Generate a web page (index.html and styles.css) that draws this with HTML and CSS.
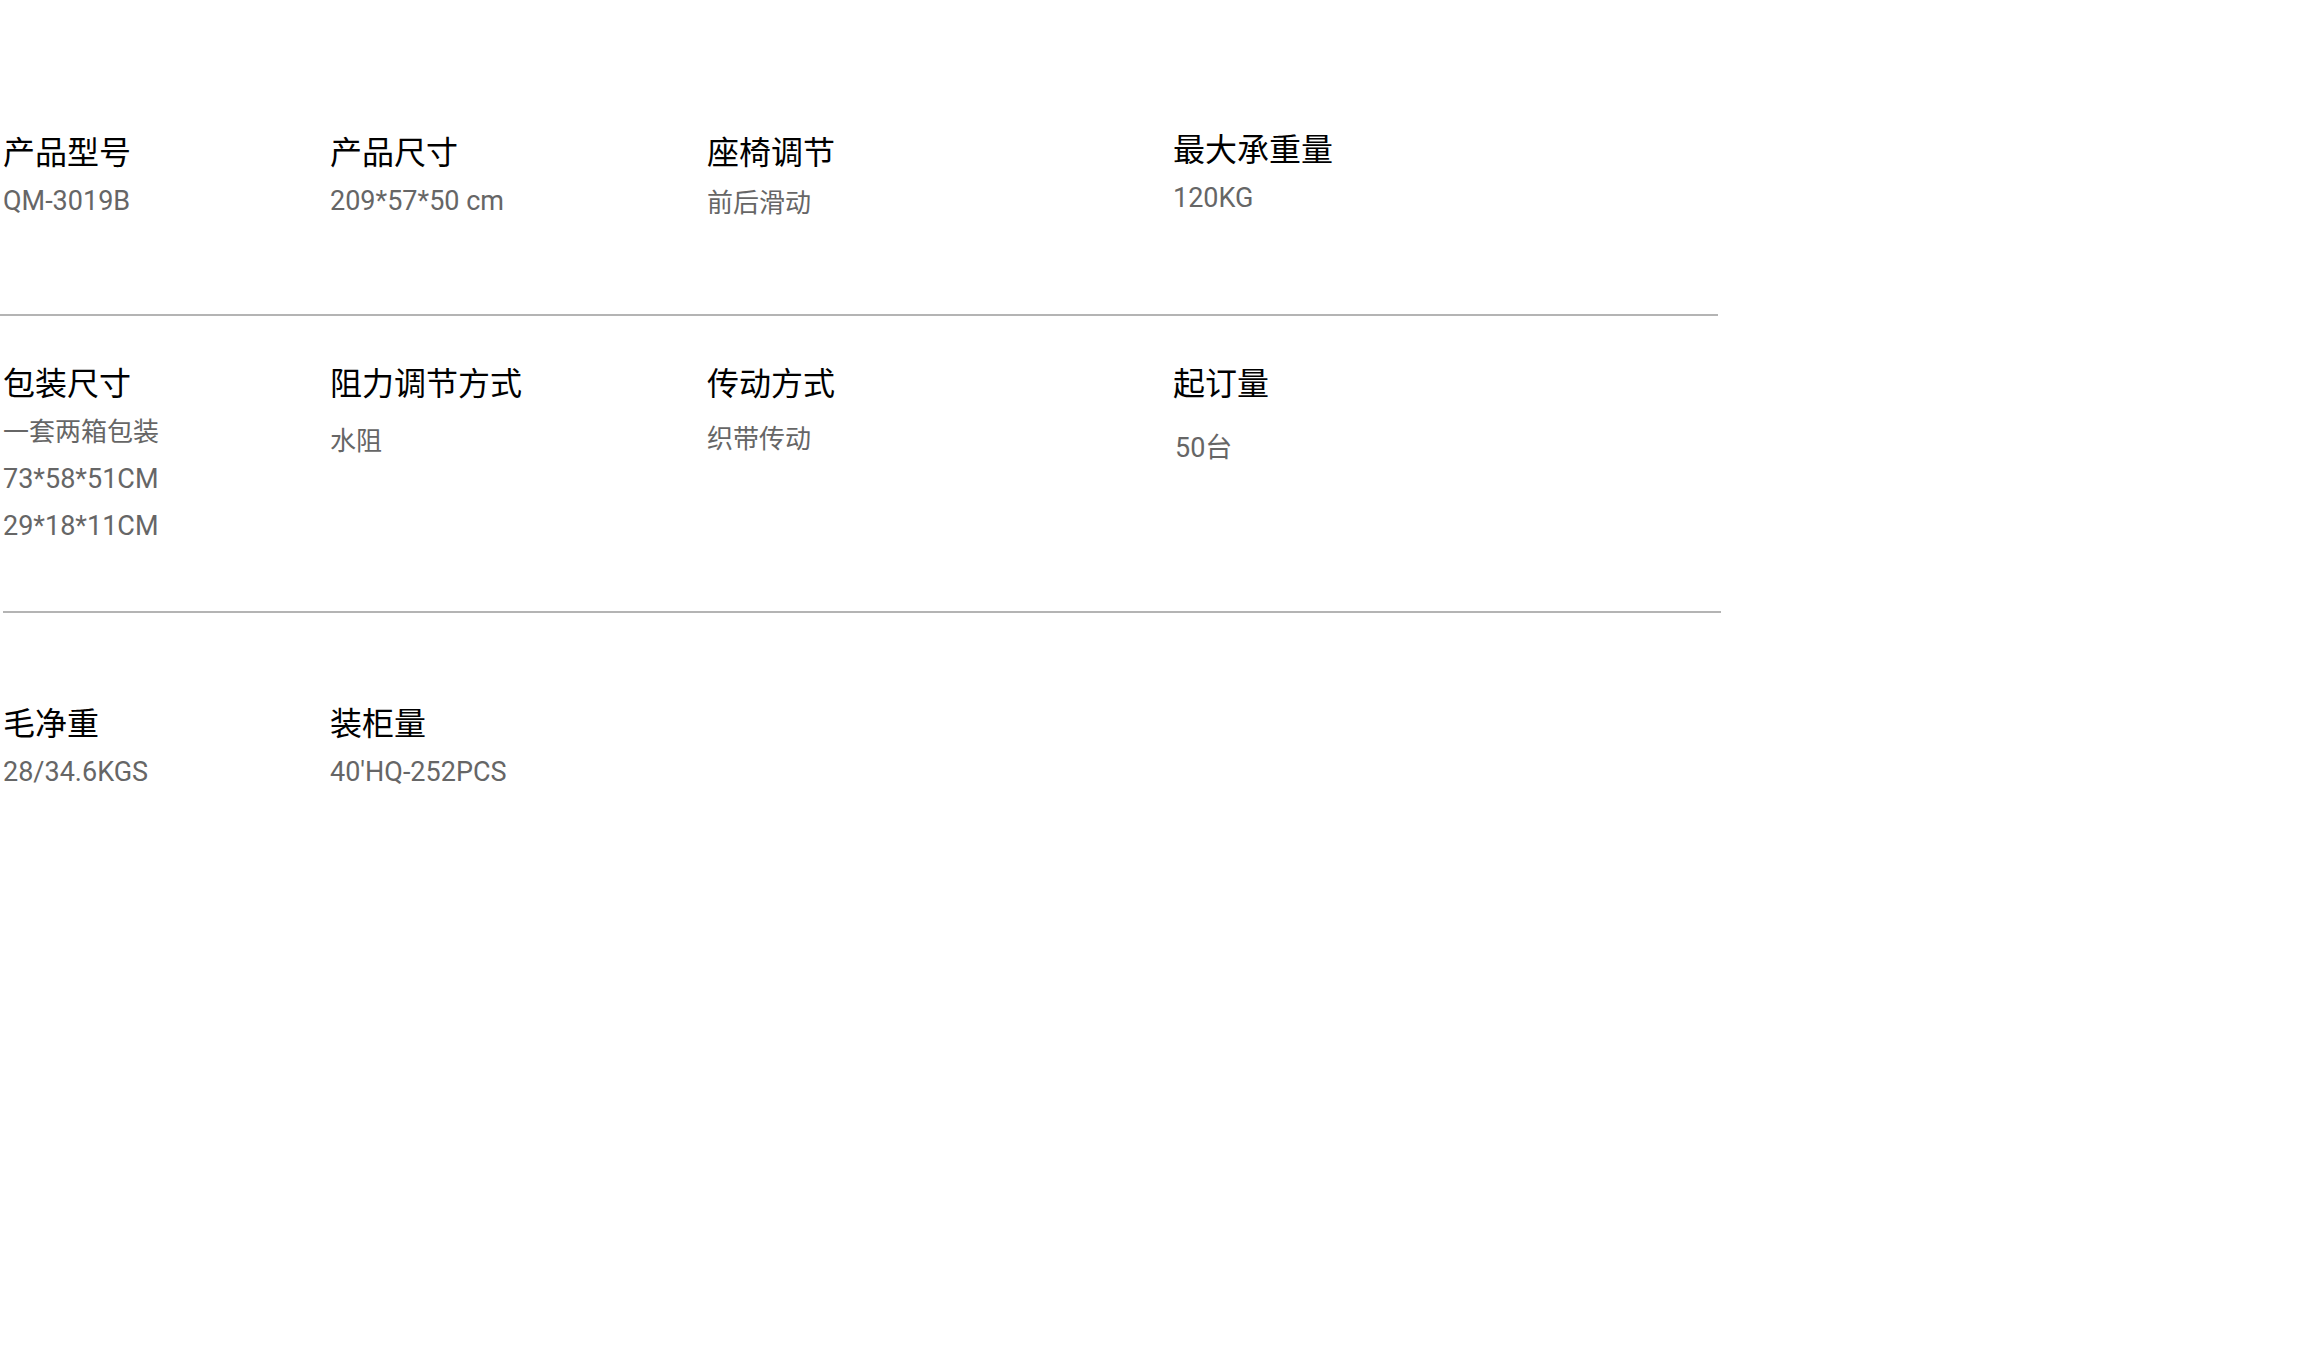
FILE: index.html
```html
<!DOCTYPE html>
<html lang="zh-CN">
<head>
<meta charset="utf-8">
<title>产品参数</title>
<link rel="stylesheet" href="styles.css">
</head>
<body>
<div class="specs">
  <div class="row row-1">
    <div class="cell">
      <div class="label">产品型号</div>
      <div class="value">QM-3019B</div>
    </div>
    <div class="cell">
      <div class="label">产品尺寸</div>
      <div class="value">209*57*50 cm</div>
    </div>
    <div class="cell">
      <div class="label">座椅调节</div>
      <div class="value value-cjk shift-1">前后滑动</div>
    </div>
    <div class="cell cell-up">
      <div class="label">最大承重量</div>
      <div class="value">120KG</div>
    </div>
  </div>
  <div class="divider divider-1"></div>
  <div class="row row-2">
    <div class="cell">
      <div class="label">包装尺寸</div>
      <div class="value value-cjk">一套两箱包装</div>
      <div class="value">73*58*51CM</div>
      <div class="value">29*18*11CM</div>
    </div>
    <div class="cell">
      <div class="label">阻力调节方式</div>
      <div class="value value-cjk shift-9">水阻</div>
    </div>
    <div class="cell">
      <div class="label">传动方式</div>
      <div class="value value-cjk shift-7">织带传动</div>
    </div>
    <div class="cell">
      <div class="label">起订量</div>
      <div class="value shift-16">50台</div>
    </div>
  </div>
  <div class="divider divider-2"></div>
  <div class="row row-3">
    <div class="cell">
      <div class="label">毛净重</div>
      <div class="value">28/34.6KGS</div>
    </div>
    <div class="cell">
      <div class="label">装柜量</div>
      <div class="value">40'HQ-252PCS</div>
    </div>
  </div>
</div>
</body>
</html>
```
FILE: styles.css
```css
html, body {
  margin: 0;
  padding: 0;
  background: #ffffff;
}

body {
  font-family: Roboto, "Noto Sans CJK SC", sans-serif;
  width: 2308px;
  min-height: 1367px;
}

.specs {
  width: 1721px;
}

.row {
  display: grid;
  grid-template-columns: 327px 377px 466px 1fr;
  padding-left: 3px;
}

.row-1 {
  padding-top: 130px;
  padding-bottom: 87px;
}

.row-2 {
  padding-top: 45px;
  padding-bottom: 61px;
}

.row-3 {
  padding-top: 88px;
}

.cell {
  display: flex;
  flex-direction: column;
}

.label {
  font-family: "Noto Sans CJK SC", sans-serif;
  font-size: 32px;
  line-height: 40px;
  color: #000000;
  margin-bottom: 8px;
  white-space: nowrap;
}

.value {
  font-family: Roboto, "Noto Sans CJK SC", sans-serif;
  font-size: 27px;
  line-height: 47px;
  color: #666666;
  white-space: nowrap;
}

.value-cjk {
  font-size: 26px;
}

.cell-up {
  margin-top: -3px;
}

.shift-1 { margin-top: 2px; }
.shift-7 { margin-top: 7px; }
.shift-9 { margin-top: 9px; }
.shift-16 { margin-top: 16px; padding-left: 2px; }

.divider {
  height: 2px;
  background: #b4b4b4;
}

.divider-1 {
  width: 1718px;
}

.divider-2 {
  width: 1718px;
  margin-left: 3px;
}
```
